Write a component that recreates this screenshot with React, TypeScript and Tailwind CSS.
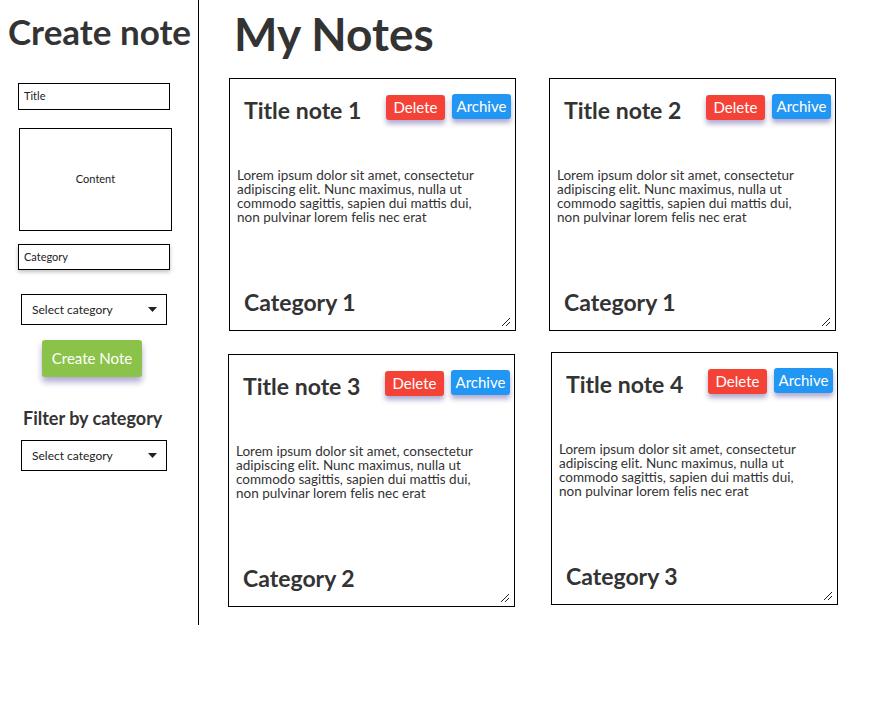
import React from "react";

const notes = [
  { title: "Title note 1", category: "Category 1", shift: "" },
  { title: "Title note 2", category: "Category 1", shift: "" },
  { title: "Title note 3", category: "Category 2", shift: "-ml-px" },
  { title: "Title note 4", category: "Category 3", shift: "ml-[2px] -mt-[2px]" },
];

const lorem =
  "Lorem ipsum dolor sit amet, consectetur adipiscing elit. Nunc maximus, nulla ut commodo sagittis, sapien dui mattis dui, non pulvinar lorem felis nec erat";

function Grip() {
  return (
    <svg width="10" height="10" viewBox="0 0 10 10" className="absolute bottom-[3px] right-[4px]">
      <path d="M1 9 L9 1 M5 9 L9 5" stroke="#222" strokeWidth="1" fill="none" />
    </svg>
  );
}

function SelectBox({ label }: { label: string }) {
  return (
    <div className="flex h-[31px] w-[146px] items-center justify-between border border-black bg-white pl-[10px] pr-[9px] text-[12px] text-[#222]">
      <span>{label}</span>
      <svg width="9" height="5" viewBox="0 0 9 5">
        <path d="M0 0 L9 0 L4.5 5 Z" fill="#222" />
      </svg>
    </div>
  );
}

function NoteCard({ title, category, shift }: { title: string; category: string; shift: string }) {
  return (
    <article className={`relative flex h-[253px] w-[287px] flex-col border border-black bg-white ${shift}`}>
      <div className="flex items-start justify-between pl-[14px] pr-[4px] pt-[15px]">
        <h2 className="pt-[2px] text-[23px] font-bold leading-[28px] text-[#333]">{title}</h2>
        <div className="flex gap-[7px]">
          <button className="mt-[1px] h-[25px] w-[59px] rounded-[3px] bg-[#f44336] text-[15px] leading-[25px] text-white shadow-[0_4px_5px_rgba(80,70,150,0.45)]">
            Delete
          </button>
          <button className="h-[25px] w-[59px] rounded-[3px] bg-[#2196f3] text-[15px] leading-[25px] text-white shadow-[0_4px_5px_rgba(80,70,150,0.45)]">
            Archive
          </button>
        </div>
      </div>
      <p className="mt-[44px] w-[250px] pl-[7px] text-[13.5px] leading-[14px] text-[#333]">{lorem}</p>
      <div className="mt-auto pb-[14px] pl-[14px] text-[23px] font-bold leading-[28px] text-[#333]">{category}</div>
      <Grip />
    </article>
  );
}

export default function App() {
  return (
    <div className="flex h-[725px] w-[880px] bg-white text-[#333]" style={{ fontFamily: "Lato, 'Open Sans', sans-serif" }}>
      <aside className="flex h-[625px] w-[199px] shrink-0 flex-col border-r border-black">
        <h1 className="pl-[8px] pt-[12px] text-[35px] font-bold leading-[38px] text-[#333]">Create note</h1>
        <div className="ml-[18px] mt-[33px] flex h-[27px] w-[152px] items-center border border-black pl-[5px] text-[11px] text-[#222]">
          Title
        </div>
        <div className="ml-[19px] mt-[18px] flex h-[103px] w-[153px] items-center justify-center border border-black text-[11px] text-[#222]">
          Content
        </div>
        <div className="ml-[18px] mt-[13px] flex h-[26px] w-[152px] items-center border border-black pl-[5px] text-[11px] text-[#222] shadow-[0_2px_4px_rgba(0,0,0,0.25)]">
          Category
        </div>
        <div className="ml-[21px] mt-[24px]">
          <SelectBox label="Select category" />
        </div>
        <button className="ml-[42px] mt-[15px] h-[37px] w-[100px] rounded-[3px] bg-[#8bc34a] text-[15px] text-white shadow-[0_5px_6px_rgba(80,70,150,0.45)]">
          Create Note
        </button>
        <h3 className="ml-[23px] mt-[30px] text-[18px] font-bold leading-[22px] text-[#333]">Filter by category</h3>
        <div className="ml-[21px] mt-[11px]">
          <SelectBox label="Select category" />
        </div>
      </aside>
      <main className="flex flex-col pl-[30px]">
        <h1 className="pl-[5px] pt-[7px] text-[46px] font-bold leading-[54px] text-[#333]">My Notes</h1>
        <div className="mt-[17px] grid grid-cols-[287px_287px] gap-x-[33px] gap-y-[23px]">
          {notes.map((n) => (
            <NoteCard key={n.title} {...n} />
          ))}
        </div>
      </main>
    </div>
  );
}
